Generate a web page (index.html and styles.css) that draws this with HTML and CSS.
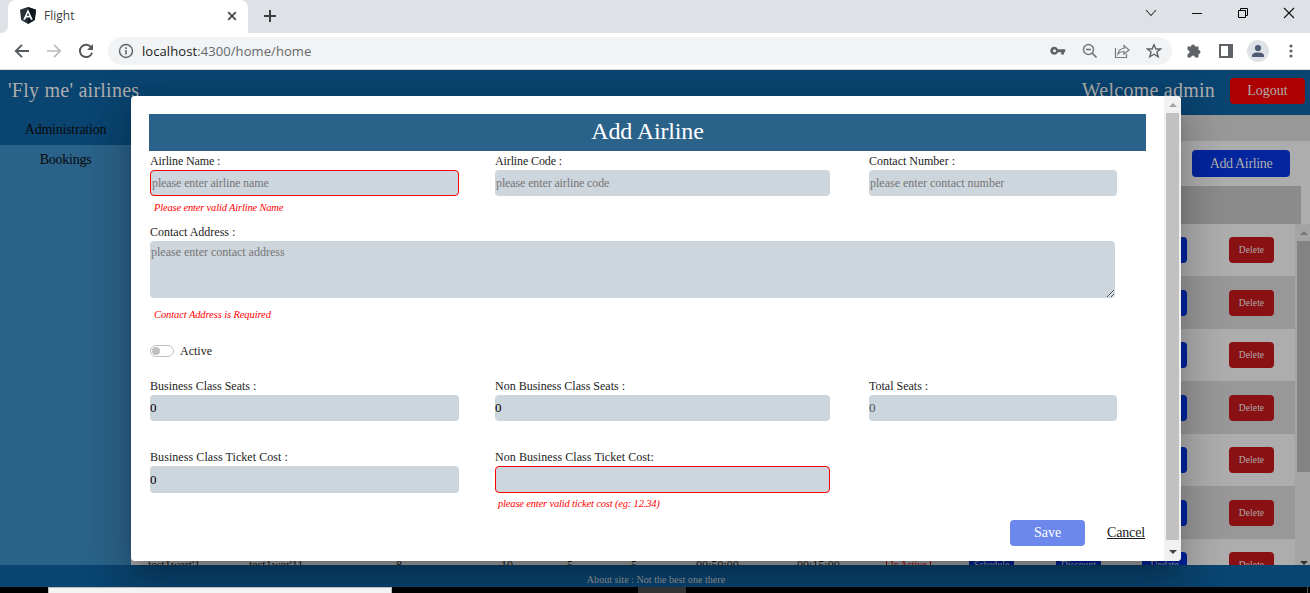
FILE: index.html
```html
<!DOCTYPE html>
<html lang="en">
<head>
<meta charset="utf-8">
<title>Flight</title>
<link rel="stylesheet" href="styles.css">
</head>
<body>
<div class="tabstrip">
  <div class="tab-prev"></div>
  <div class="tab">
    <svg class="tab-logo" width="16" height="17" viewBox="0 0 16 17"><path fill="#263038" d="M8 0 16 2.8 14.8 13 8 17 1.2 13 0 2.8Z"/><path fill="#11181d" d="M8 0 16 2.8 14.8 13 8 17Z"/><path fill="#fff" fill-rule="evenodd" d="M8 2.2 12.8 12.8H10.9L9.9 10.4H6.1L5.1 12.8H3.2ZM8 5.7 6.7 8.8H9.3Z"/></svg>
    <span class="tab-title">Flight</span>
    <svg width="10" height="10" viewBox="0 0 10 10"><path d="M1.2 1.2 8.8 8.8M8.8 1.2 1.2 8.8" stroke="#45494d" stroke-width="1.7"/></svg>
  </div>
  <svg class="newtab" width="12" height="12" viewBox="0 0 12 12"><path d="M6 0V12M0 6H12" stroke="#3c4043" stroke-width="2"/></svg>
  <div class="winctl">
    <svg width="12" height="12" viewBox="0 0 12 12"><path d="M1 3 6 8.5 11 3" fill="none" stroke="#333" stroke-width="1.1"/></svg>
    <svg width="12" height="12" viewBox="0 0 12 12"><path d="M1 6.5H11" stroke="#111"/></svg>
    <svg width="12" height="12" viewBox="0 0 12 12"><path d="M1.5 3.5H8.5V10.5H1.5ZM3.5 3.5V1.5H10.5V8.500H8.500" fill="none" stroke="#000"/></svg>
    <svg width="12" height="12" viewBox="0 0 12 12"><path d="M1 1 11 11M11 1 1 11" stroke="#111" stroke-width="1.1"/></svg>
  </div>
</div>
<div class="toolbar">
  <svg class="nav" width="16" height="16" viewBox="0 0 16 16"><path d="M15 8H2M8 1.800 1.800 8 8 14.200" fill="none" stroke="#55585c" stroke-width="1.9"/></svg>
  <svg class="nav" width="16" height="16" viewBox="0 0 16 16"><path d="M1 8H14M8 1.800 14.200 8 8 14.200" fill="none" stroke="#b9bbbd" stroke-width="1.7"/></svg>
  <svg class="nav" width="16" height="16" viewBox="0 0 16 16"><path d="M13.300 4.500A6.200 6.200 0 1 0 14 9.800" fill="none" stroke="#55585c" stroke-width="2"/><path d="M15 1V7H9Z" fill="#55585c"/></svg>
  <div class="omnibox">
    <svg width="16" height="16" viewBox="0 0 16 16"><circle cx="8" cy="8" r="6.500" fill="none" stroke="#5f6368" stroke-width="1.400"/><path d="M8 7V11.500M8 4.300V5.900" stroke="#5f6368" stroke-width="1.600"/></svg>
    <span class="url"><b>localhost</b>:4300/home/home</span>
    <div class="omni-icons">
      <svg width="16" height="16" viewBox="0 0 16 16"><path fill="#5f6368" fill-rule="evenodd" d="M8 6.300H15.200V9.200H14V11.500H11.200V9.200H8A4 4 0 1 1 8 6.300ZM4.500 6.300A1.500 1.500 0 1 0 4.500 9.300 1.500 1.500 0 0 0 4.500 6.300Z"/></svg>
      <svg width="16" height="16" viewBox="0 0 16 16"><circle cx="6.500" cy="6.500" r="5" fill="none" stroke="#777a7e" stroke-width="1.500"/><path d="M4 6.500H9M10.200 10.200 14.500 14.500" stroke="#6a6d71" stroke-width="1.600"/></svg>
      <svg width="16" height="16" viewBox="0 0 16 16"><path d="M1.500 5V14.500H12.500V11M4 11C4.500 7 7 5.500 10 5.500V2.500L15 7 10 11.300V8.500C7.500 8.500 5.500 9 4 11Z" fill="none" stroke="#777a7e" stroke-width="1.200"/></svg>
      <svg width="16" height="16" viewBox="0 0 16 16"><path d="M8 1.700 9.900 6H14.600L10.900 9 12.200 13.800 8 11.200 3.800 13.800 5.100 9 1.400 6H6.100Z" fill="none" stroke="#5f6368" stroke-width="1.400"/></svg>
    </div>
  </div>
  <svg class="ext" width="16" height="16" viewBox="0 0 16 16"><path fill="#5f6368" d="M1.500 3.500H5A2 2 0 1 1 9 3.500H12.500V7A2 2 0 1 1 12.500 11V14.500H9A2 2 0 0 0 5 14.500H1.500V11A2 2 0 0 0 1.500 7Z"/></svg>
  <svg class="panel" width="14" height="14" viewBox="0 0 14 14"><path d="M1 1H13V13H1Z" fill="#fff" stroke="#5f6368" stroke-width="2"/><path d="M9 0H14V14H9Z" fill="#5f6368"/></svg>
  <svg class="avatar" width="22" height="22" viewBox="0 0 22 22"><circle cx="11" cy="11" r="11" fill="#dee1e6"/><circle cx="11" cy="8" r="3.100" fill="#4f5b75"/><path d="M5 17V15.500C5 13 9 12.500 11 12.500S17 13 17 15.500V17Z" fill="#4f5b75"/></svg>
  <svg class="dots" width="4" height="14" viewBox="0 0 4 14"><g fill="#5f6368"><circle cx="2" cy="2" r="1.600"/><circle cx="2" cy="7" r="1.600"/><circle cx="2" cy="12" r="1.600"/></g></svg>
</div>

<div class="viewport">
  <header class="site-header">
    <span class="brand">'Fly me' airlines</span>
    <span class="welcome">Welcome admin</span>
    <button class="btn logout">Logout</button>
  </header>
  <div class="body">
    <nav class="sidebar">
      <a class="side-item side-active">Administration</a>
      <a class="side-item">Bookings</a>
    </nav>
    <main class="content">
      <div class="strip"></div>
      <div class="actions"><button class="btn add">Add Airline</button></div>
      <div class="thead"></div>
      <div class="table">
        <div class="rows">
          <div class="row"><button class="sm blue"></button><button class="sm red">Delete</button></div>
          <div class="row alt"><button class="sm blue"></button><button class="sm red">Delete</button></div>
          <div class="row"><button class="sm blue"></button><button class="sm red">Delete</button></div>
          <div class="row alt"><button class="sm blue"></button><button class="sm red">Delete</button></div>
          <div class="row"><button class="sm blue"></button><button class="sm red">Delete</button></div>
          <div class="row alt"><button class="sm blue"></button><button class="sm red">Delete</button></div>
          <div class="row full">
            <span>test1wert'1</span><span>test1wer'11</span><span>8</span><span>10</span><span>5</span><span>5</span><span>00:50:00</span><span>00:15:00</span>
            <button class="sm outline">In Active</button><button class="sm blue">Schedule</button><button class="sm blue">Discount</button><button class="sm blue">Update</button><button class="sm red">Delete</button>
          </div>
        </div>
        <div class="tscroll"><i class="up"></i><i class="thumb"></i><i class="down"></i></div>
      </div>
    </main>
  </div>
  <footer class="site-footer">About site : Not the best one there</footer>

  <section class="dialog">
    <form class="form">
      <h1 class="title">Add Airline</h1>
      <div class="grid first">
        <label class="field"><span class="lbl snug">Airline Name :</span><input class="invalid snug" placeholder="please enter airline name"><em class="err">Please enter valid Airline Name</em></label>
        <label class="field"><span class="lbl snug">Airline Code :</span><input class="snug" placeholder="please enter airline code"></label>
        <label class="field"><span class="lbl">Contact Number :</span><input placeholder="please enter contact number"></label>
      </div>
      <label class="field address"><span class="lbl">Contact Address :</span><textarea placeholder="please enter contact address"></textarea><em class="err">Contact Address is Required</em></label>
      <div class="toggle"><span class="switch"><i></i></span><span class="lbl-active">Active</span></div>
      <div class="grid seats">
        <label class="field"><span class="lbl">Business Class Seats :</span><input class="value" value="0"></label>
        <label class="field"><span class="lbl">Non Business Class Seats :</span><input class="value" value="0"></label>
        <label class="field"><span class="lbl">Total Seats :</span><input class="value" value="0" disabled></label>
      </div>
      <div class="grid costs">
        <label class="field"><span class="lbl">Business Class Ticket Cost :</span><input class="value tall" value="0"></label>
        <label class="field"><span class="lbl">Non Business Class Ticket Cost:</span><input class="invalid tall"><em class="err cost">please enter valid ticket cost (eg: 12.34)</em></label>
      </div>
      <div class="foot"><button type="button" class="btn save">Save</button><a class="cancel">Cancel</a></div>
    </form>
    <div class="dscroll"><i class="up"></i><i class="thumb"></i><i class="down"></i></div>
  </section>
</div>
<div class="taskbar"><div class="search"></div><div class="task"></div><div class="peek"></div></div>
</body>
</html>
```

FILE: styles.css
```css
* { box-sizing: border-box; }
body { margin: 0; width: 1310px; height: 593px; overflow: hidden; display: flex; flex-direction: column; font-family: "Liberation Serif", "Times New Roman", serif; font-size: 12px; color: #1c1c1c; background: #fff; }
button, input, textarea { font-family: inherit; border: 0; margin: 0; }
svg { display: block; flex: none; }

/* browser chrome */
.tabstrip { height: 33px; flex: none; display: flex; background: #dee1e6; font-family: "Open Sans", sans-serif; }
.tab-prev { width: 8px; background: #fff; flex: none; }
.tab-prev::before { content: ""; display: block; height: 33px; background: #dee1e6; border-bottom-right-radius: 7px; }
.tab { width: 240px; background: #fff; border-radius: 8px 8px 0 0; display: flex; align-items: center; padding: 0 11px 2px 12px; }
.tab-title { flex: 1; padding-left: 8px; font-size: 12px; color: #3c4043; }
.newtab { margin: 10px 0 0 16px; }
.winctl { margin-left: auto; display: flex; gap: 34px; padding: 7px 15px 0 0; }
.toolbar { height: 37px; flex: none; display: flex; align-items: center; background: #fff; border-bottom: 1px solid #d9dbde; padding: 0 0 0 14px; }
.nav { margin-right: 16px; }
.omnibox { width: 1064px; height: 28px; border-radius: 14px; margin-left: -2px; background: #f1f3f4; display: flex; align-items: center; padding: 0 10px; }
.url { font: 13px "Open Sans", sans-serif; letter-spacing: 0.08px; color: #65696d; padding-left: 8px; }
.url b { font-weight: 400; color: #202124; }
.omni-icons { margin-left: auto; display: flex; gap: 16px; }
.ext { margin-left: 14px; }
.panel { margin-left: 17px; }
.avatar { margin-left: 14px; }
.dots { margin-left: 20px; }

/* page behind the dialog */
.viewport { height: 517px; flex: none; position: relative; overflow: hidden; display: flex; flex-direction: column; }
.site-header { height: 45px; flex: none; background: #0a4470; display: flex; align-items: center; padding: 0 5px 4px 8px; color: #adadad; font-size: 20px; letter-spacing: 0.24px; }
.brand { white-space: nowrap; }
.welcome { margin-left: auto; }
.btn { border-radius: 4px; display: grid; place-items: center; color: #adadad; padding: 0; font-size: 14px; }
.logout { width: 75px; height: 26px; margin-left: 15px; background: #ad0000; }
.body { flex: 1; min-height: 0; display: flex; }
.sidebar { width: 131px; flex: none; background: #2b6289; }
.side-item { display: block; height: 30px; line-height: 29px; text-align: center; font-size: 14px; letter-spacing: -0.25px; color: #0a0a0a; }
.side-active { background: #0a4470; }
.content { flex: 1; min-width: 0; background: #adadad; display: flex; flex-direction: column; }
.strip { height: 26px; flex: none; background: #989898; }
.actions { height: 45px; flex: none; display: flex; justify-content: flex-end; padding: 9px 20px 0 0; }
.add { width: 98px; height: 27px; background: #03259e; letter-spacing: -0.35px; }
.thead { height: 38px; flex: none; margin-right: 9px; background: #8b8b8b; }
.table { flex: 1; min-height: 0; display: flex; overflow: hidden; }
.rows { flex: 1; min-width: 0; }
.row { height: 52.48px; display: flex; align-items: center; justify-content: flex-end; gap: 42px; padding-right: 21px; }
.alt { background: #989898; }
.sm { width: 45px; height: 26px; padding: 0; border-radius: 4px; font-size: 9.5px; letter-spacing: 0.1px; white-space: nowrap; color: #adadad; flex: none; }
.blue { background: #03259e; }
.red { background: #891013; }
.outline { background: none; border: 1px solid #ad0000; color: #ad0000; }
.full { display: grid; grid-template-columns: 101px 147px 105px 66px 64px 65px 101px 89px 83px 87px 86px 87px 45px; gap: 0; justify-content: start; padding: 0 0 0 17px; }
.full span { font-size: 12px; white-space: nowrap; }
.tscroll { width: 15px; flex: none; background: #a4a4a4; overflow: hidden; display: flex; flex-direction: column; align-items: center; padding-left: 2px; }
.tscroll .thumb { width: 13px; height: 231px; background: #838383; }

/* scrollbar parts */
.up, .down { width: 0; height: 0; border: 4px solid transparent; flex: none; }
.up { border-top: 0; border-bottom-color: #777; }
.down { border-bottom: 0; border-top-color: #333; }
.thumb { flex: none; }
.tscroll .up { margin: 7px 0 6px; }
.tscroll .down { margin-top: auto; }
.site-footer { height: 22px; flex: none; background: #0a4470; color: #999; font-size: 10px; letter-spacing: 0.04px; text-align: center; line-height: 29px; padding-left: 2px; }

/* dialog */
.dialog { position: absolute; left: 131px; top: 26px; width: 1050px; height: 465px; border-radius: 4px; background: #fff; display: flex; box-shadow: 0 11px 15px -7px rgba(0,0,0,.2), 0 24px 38px 3px rgba(0,0,0,.14), 0 9px 46px 8px rgba(0,0,0,.12); }
.form { flex: 1; min-width: 0; padding: 18px 18px 0; }
.title { width: 997px; height: 37px; margin: 0; background: #2b6289; color: #fff; font-size: 24px; letter-spacing: -0.15px; font-weight: 400; text-align: center; line-height: 34px; }
.grid { display: grid; grid-template-columns: 309px 335px 248px; column-gap: 36px; padding-left: 1px; }
.grid .field:nth-child(3) { margin-left: 3px; margin-right: -3px; }
.first { height: 72px; padding-top: 1px; }
.field { display: flex; flex-direction: column; }
.lbl { height: 18px; line-height: 18px; }
.costs .lbl { letter-spacing: 0.07px; }
.field input { width: 100%; height: 26px; border-radius: 4px; background: #cdd5dd; padding: 0 1px; font-size: 12px; outline: 0; }
.field .snug { letter-spacing: -0.12px; }
.field input.tall { height: 27px; }
.field input.invalid { border: 1px solid #f00; }
.field input.value { font-size: 13px; color: #000; padding-left: 0; }
.field input:disabled { color: #545454; }
::placeholder { color: #757575; opacity: 1; }
.err { color: #f00; font-size: 10.5px; letter-spacing: -0.17px; line-height: 23px; padding-left: 4px; }
.err.cost { padding-left: 3px; line-height: 22px; }
.address { padding-left: 1px; }
.address textarea { width: 965px; height: 57px; border-radius: 4px; background: #cdd5dd; padding: 4px 1px; font-size: 12px; outline: 0; resize: both; }
.address .err { line-height: 33px; letter-spacing: -0.1px; }
.toggle { height: 46px; display: flex; align-items: flex-start; gap: 6px; padding: 14px 0 0 1px; }
.switch { width: 24px; height: 12px; border: 1px solid #bfbfbf; border-radius: 6px; padding: 1px; }
.switch i { display: block; width: 8px; height: 8px; border-radius: 50%; background: #bfbfbf; }
.lbl-active { line-height: 13px; }
.seats { height: 71px; }
.costs { height: 72px; }
.foot { display: flex; align-items: center; justify-content: flex-end; gap: 22px; font-size: 14px; width: 996px; height: 26px; }
.save { width: 75px; height: 26px; background: #6c88ec; color: #fff; }
.cancel { text-decoration: underline; letter-spacing: -0.15px; }
.dscroll { width: 17px; background: #f1f1f1; display: flex; flex-direction: column; align-items: center; border-radius: 0 4px 4px 0; }
.dscroll .up { margin: 7px 0 6px; border-bottom-color: #a3a3a3; }
.dscroll .thumb { width: 13px; height: 427px; background: #c1c1c1; }
.dscroll .down { margin-top: 10px; border-top-color: #444; }

.taskbar { height: 6px; flex: none; background: #000; display: flex; }
.search { margin-left: 48px; width: 344px; background: #f3f3f3; border: 1px solid #bbb; border-bottom: 0; }
.task { margin-left: 246px; width: 48px; background: #333; }
.peek { margin-left: auto; width: 3px; border-left: 1px solid #555; }
```
